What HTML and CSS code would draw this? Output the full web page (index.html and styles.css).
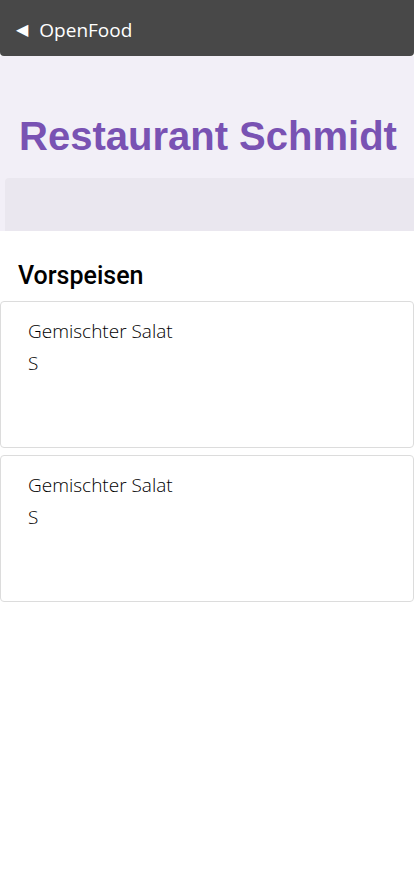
FILE: index.html
```html
<!DOCTYPE html>
<html lang="de">
<head>
<meta charset="utf-8">
<title>OpenFood</title>
<link rel="stylesheet" href="styles.css">
</head>
<body>
<header class="topbar">
  <span class="back">&#9664;</span>
  <span class="brand">OpenFood</span>
</header>
<section class="hero">
  <h1 class="title">Restaurant Schmidt</h1>
  <div class="band"></div>
</section>
<main class="menu">
  <h2 class="section">Vorspeisen</h2>
  <div class="card">
    <div class="dish">Gemischter Salat</div>
    <div class="size">S</div>
  </div>
  <div class="card">
    <div class="dish">Gemischter Salat</div>
    <div class="size">S</div>
  </div>
</main>
</body>
</html>
```
FILE: styles.css
```css
html, body {
  margin: 0;
  padding: 0;
  background: #ffffff;
}
body {
  font-family: "Open Sans", "Noto Sans", sans-serif;
  color: #000;
}
.topbar {
  height: 56px;
  background: #484848;
  border-radius: 0 0 4px 4px;
  display: flex;
  align-items: center;
  padding: 4px 0 0 16px;
  gap: 11px;
  box-sizing: border-box;
  color: #fff;
}
.back {
  font-size: 16px;
  line-height: 1;
  font-family: "DejaVu Sans", sans-serif;
}
.brand {
  font-size: 19px;
  font-family: "Open Sans", sans-serif;
}
.hero {
  background: #f2eff7;
  padding-top: 56px;
  display: flex;
  flex-direction: column;
}
.title {
  margin: 0;
  font-family: "Liberation Sans", Arial, sans-serif;
  font-weight: bold;
  font-size: 40px;
  line-height: 48px;
  color: #7952b3;
  text-align: center;
  padding-left: 2px;
}
.band {
  margin-top: 18px;
  margin-left: 5px;
  height: 53px;
  background: #eae7ef;
  border-top-left-radius: 4px;
}
.menu {
  display: flex;
  flex-direction: column;
  gap: 7px;
}
.section {
  margin: 0;
  padding: 29px 18px 0;
  font-family: Roboto, sans-serif;
  font-weight: 500;
  font-size: 25px;
  line-height: 32px;
  margin-bottom: 2px;
}
.card {
  border: 1px solid #dcdcdc;
  border-radius: 4px;
  height: 147px;
  box-sizing: border-box;
  padding: 16px 27px;
}
.dish {
  font-size: 19px;
  font-weight: 350;
  line-height: 26px;
}
.size {
  font-size: 19px;
  font-weight: 350;
  line-height: 26px;
  margin-top: 6px;
}
```
